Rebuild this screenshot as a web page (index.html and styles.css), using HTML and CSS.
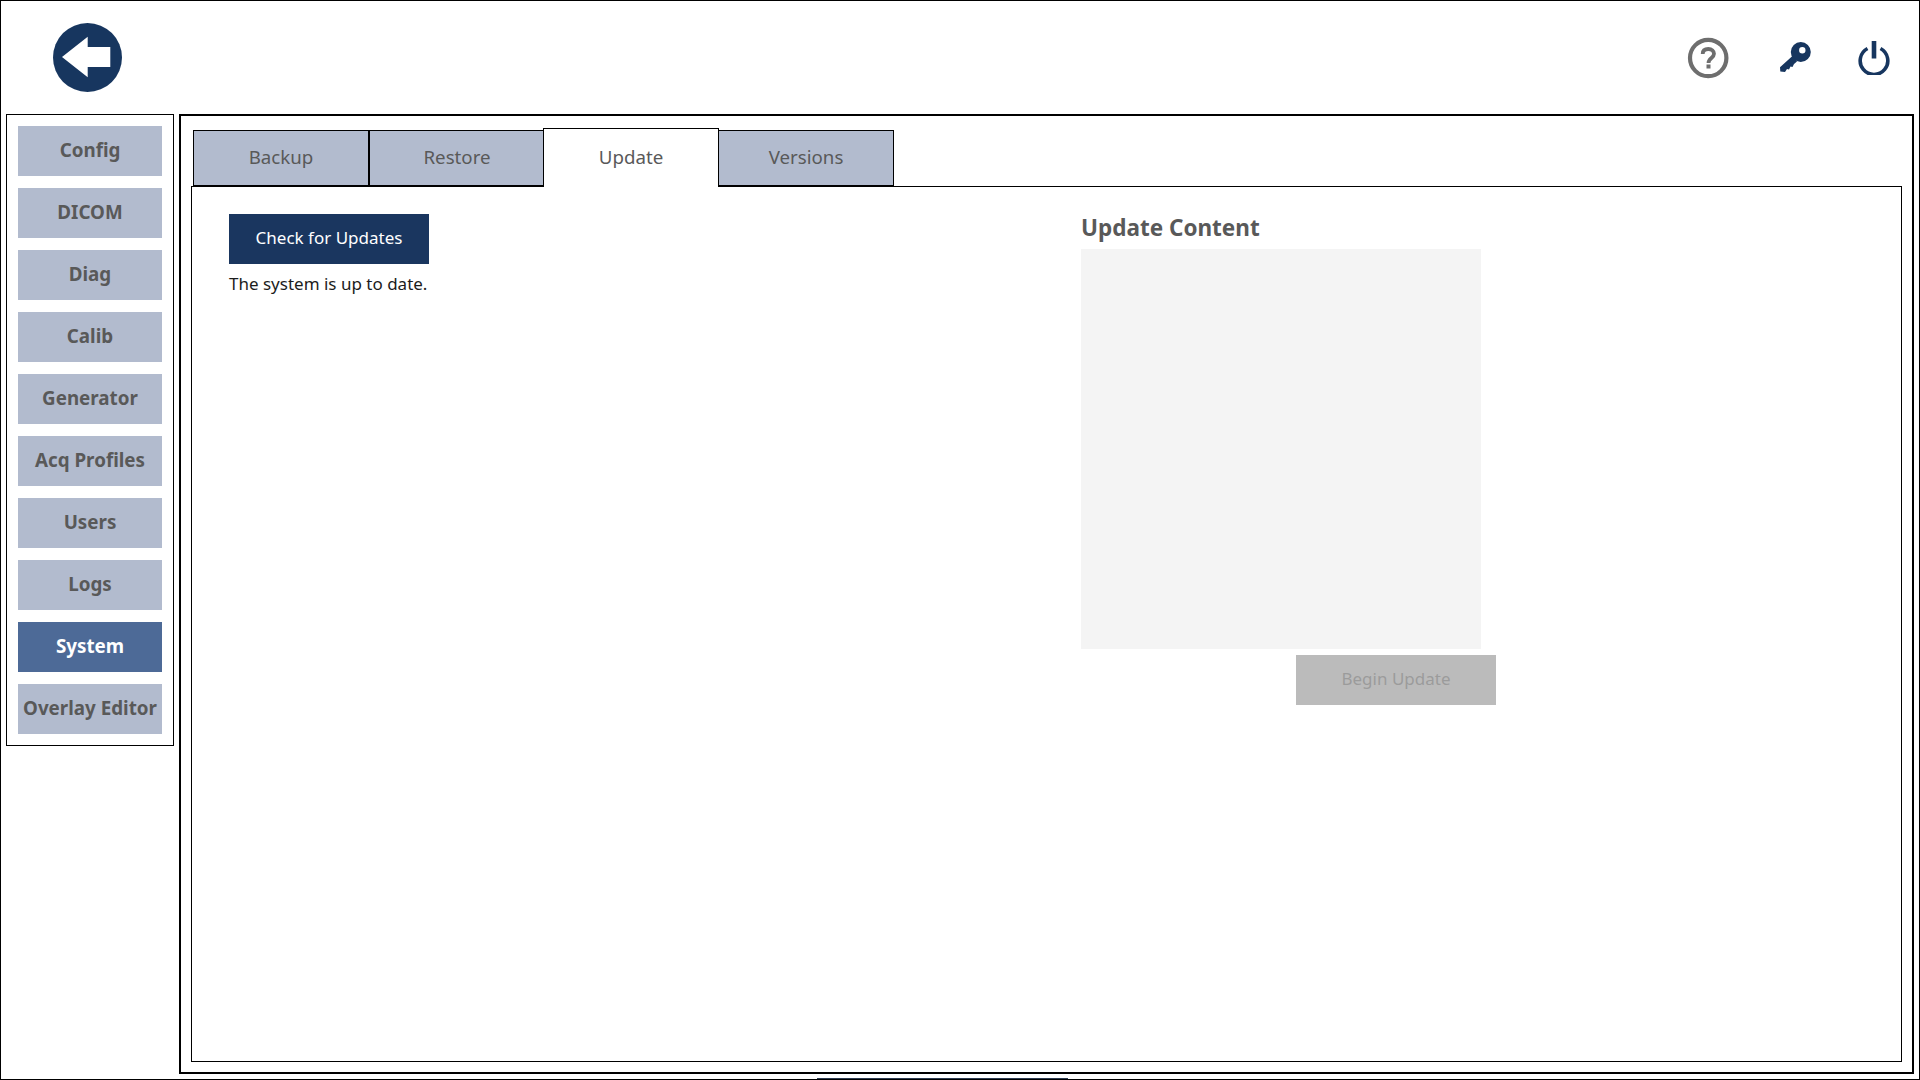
FILE: index.html
```html
<!DOCTYPE html>
<html lang="en">
<head>
    <meta charset="UTF-8">
    <title>System | Update</title>
    <link rel="stylesheet" href="styles.css">
</head>
<body>
    <div class="app">
        <header class="topbar">
            <svg class="icon-back" viewBox="0 0 69 69" width="69" height="69">
                <circle cx="34.5" cy="34.5" r="34.5" fill="#17365f"/>
                <path d="M9 34 L34.7 13.7 V24 H57.3 V44 H34.7 V54.3 Z" fill="#fff"/>
            </svg>
            <div class="topbar-icons">
                <svg class="icon-help" viewBox="0 0 42 42" width="42" height="42">
                    <circle cx="21.2" cy="21" r="18.2" fill="none" stroke="#6e6e6e" stroke-width="4.2"/>
                    <path d="M15.7 17 C15.7 13.5 18 12 21.3 12 C24.8 12 27 14 27 16.8 C27 21 21.5 21 21.5 26" fill="none" stroke="#6e6e6e" stroke-width="3.8"/>
                    <rect x="19.5" y="27.5" width="4" height="4" fill="#6e6e6e"/>
                </svg>
                <svg class="icon-key" viewBox="0 0 31 31" width="31" height="31">
                    <path fill="#17365f" fill-rule="evenodd" d="M20.8 0 A10 10 0 1 1 20.8 20 A10 10 0 1 1 20.8 0 Z M22.3 5.1 A3.2 3.2 0 1 0 22.3 11.5 A3.2 3.2 0 1 0 22.3 5.1 Z"/>
                    <path fill="#17365f" d="M12.7 13.7 L0 25.3 L0.3 29.5 L5 30 L7 27 L9 27.5 L10.5 24.5 L12.5 25 L14 22 L17 19.5 Z"/>
                </svg>
                <svg class="icon-power" viewBox="0 0 32 34" width="32" height="34">
                    <path d="M9.5 7.5 A13.8 13.8 0 1 0 22.5 7.5" fill="none" stroke="#17365f" stroke-width="3.6"/>
                    <rect x="13.7" y="0" width="4.6" height="17.5" fill="#17365f"/>
                </svg>
            </div>
        </header>

        <div class="layout">
            <nav class="sidebar">
                <button class="nav-btn">Config</button>
                <button class="nav-btn">DICOM</button>
                <button class="nav-btn">Diag</button>
                <button class="nav-btn">Calib</button>
                <button class="nav-btn">Generator</button>
                <button class="nav-btn">Acq Profiles</button>
                <button class="nav-btn">Users</button>
                <button class="nav-btn">Logs</button>
                <button class="nav-btn nav-btn-active">System</button>
                <button class="nav-btn">Overlay Editor</button>
            </nav>

            <main class="main">
                <div class="tabs">
                    <button class="tab">Backup</button>
                    <button class="tab">Restore</button>
                    <button class="tab tab-active">Update</button>
                    <button class="tab">Versions</button>
                </div>
                <section class="panel">
                    <div class="check-col">
                        <button class="btn btn-primary">Check for Updates</button>
                        <p class="status-text">The system is up to date.</p>
                    </div>
                    <div class="content-col">
                        <h2 class="content-title">Update Content</h2>
                        <div class="content-box"></div>
                        <button class="btn btn-disabled" disabled>Begin Update</button>
                    </div>
                </section>
            </main>
        </div>

        <div class="bottom-strip"></div>
    </div>
</body>
</html>
```

FILE: styles.css
```css
* {
    margin: 0;
    padding: 0;
    box-sizing: border-box;
}

body {
    font-family: "Noto Sans", "Open Sans", sans-serif;
    background: white;
    color: #595959;
}

button {
    font-family: inherit;
    border: none;
}

.app {
    position: relative;
    width: 1920px;
    height: 1080px;
    border: 1px solid #000;
    display: flex;
    flex-direction: column;
    overflow: hidden;
}

.topbar {
    height: 113px;
    flex-shrink: 0;
    display: flex;
    align-items: center;
    justify-content: space-between;
    padding: 0 29px 0 52px;
}

.topbar-icons {
    display: flex;
    align-items: center;
}

.icon-key {
    margin: 0 47px 0 51px;
}

.layout {
    flex: 1;
    min-height: 0;
    display: flex;
    gap: 5px;
    padding: 0 5px 5px;
}

.sidebar {
    width: 168px;
    align-self: flex-start;
    border: 1px solid #000;
    padding: 11px;
    display: flex;
    flex-direction: column;
    gap: 12px;
}

.nav-btn {
    height: 50px;
    padding-bottom: 2px;
    background: #b2bbce;
    color: #595959;
    font-size: 18.8px;
    font-weight: 700;
    white-space: nowrap;
}

.nav-btn-active {
    background: #4d6a97;
    color: white;
}

.main {
    flex: 1;
    border: 2px solid #000;
    padding: 12px 10px 10px;
    display: flex;
    flex-direction: column;
}

.tabs {
    display: flex;
    align-items: flex-end;
    margin: 0 0 -1px 2px;
    position: relative;
    z-index: 1;
}

.tab {
    width: 176px;
    height: 57px;
    padding-bottom: 4px;
    background: #b2bbce;
    color: #595959;
    font-size: 18.7px;
    border: 1px solid #000;
    border-bottom-width: 2px;
}

.tab-active {
    position: relative;
    height: 59px;
    margin: 0 -1px 0 -2px;
    background: white;
    border-bottom: none;
}

.panel {
    flex: 1;
    border: 1px solid #000;
    padding: 27px 0 0 37px;
    display: flex;
}

.check-col {
    width: 852px;
}

.content-col {
    width: 415px;
    display: flex;
    flex-direction: column;
}

.btn {
    width: 200px;
    height: 50px;
    padding-bottom: 4px;
    font-size: 17px;
}

.btn-primary {
    background: #1a365f;
    color: white;
}

.btn-disabled {
    background: #bbb;
    color: #9b9b9b;
    align-self: flex-end;
    margin-top: 6px;
}

.status-text {
    margin-top: 8px;
    font-size: 17px;
    line-height: 24px;
    color: #1c1c1c;
}

.content-title {
    font-size: 22.5px;
    line-height: 28px;
    margin-bottom: 7px;
    font-weight: 700;
    color: #595959;
}

.content-box {
    width: 400px;
    height: 400px;
    background: #f4f4f4;
}

.bottom-strip {
    position: absolute;
    left: 816px;
    bottom: -1px;
    width: 251px;
    height: 2px;
    background: #2b3a50;
}
```
